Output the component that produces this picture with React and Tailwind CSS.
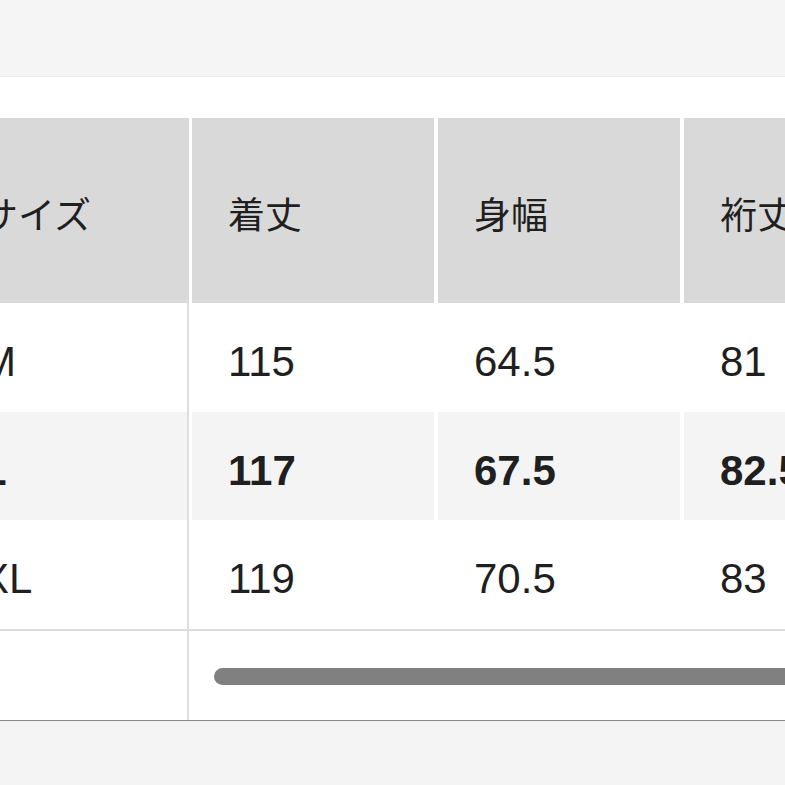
import React from 'react';

const rows = [
  { size: 'M', values: ['115', '64.5', '81'] },
  { size: 'L', values: ['117', '67.5', '82.5'], current: true },
  { size: 'XL', values: ['119', '70.5', '83'] },
];

const headers = ['着丈', '身幅', '裄丈'];

export default function App() {
  return (
    <div
      className="w-[785px] h-[785px] overflow-hidden bg-white text-[#1f1f1f]"
      style={{ fontFamily: '"Liberation Sans", "Noto Sans CJK JP", sans-serif' }}
    >
      {/* top bar */}
      <div className="h-[77px] bg-[#f5f5f5] border-b border-[#ececec]" />
      <div className="h-[41px]" />

      {/* table, scrolled a little to the right */}
      <div className="-ml-[55px] w-[1000px]">
        {/* header */}
        <div className="flex h-[185px]">
          <div className="w-[244px] bg-[#d9d9d9] flex items-center pl-9 pt-3 text-[37px]">サイズ</div>
          {headers.map((h, i) => (
            <div
              key={h}
              className={`${i === 0 ? 'ml-[3px]' : 'ml-[4px]'} w-[242px] bg-[#d9d9d9] flex items-center pl-9 pt-3 text-[37px]`}
            >
              {h}
            </div>
          ))}
        </div>

        {/* body */}
        {rows.map((r, idx) => (
          <div
            key={r.size}
            className={`flex ${idx === 1 ? 'h-[108px]' : 'h-[109px]'} ${idx === 2 ? 'border-b-2 border-[#dcdcdc] h-[111px]' : ''} text-[42px] ${r.current ? 'font-bold' : ''}`}
          >
            <div
              className={`w-[244px] border-r-2 border-[#dedede] flex items-center pl-9 pt-2 ${r.current ? 'bg-[#f4f4f4]' : ''}`}
            >
              {r.size}
            </div>
            {r.values.map((v, i) => (
              <div
                key={i}
                className={`${i === 0 ? 'ml-[3px]' : 'ml-[4px]'} w-[242px] flex items-center pl-9 pt-2 ${r.current ? 'bg-[#f4f4f4]' : ''}`}
              >
                {v}
              </div>
            ))}
          </div>
        ))}

        {/* scrollbar row */}
        <div className="flex h-[90px] border-b border-[#8a8a8a]">
          <div className="w-[244px] border-r-2 border-[#dedede]" />
          <div className="ml-[25px] mt-[37px] h-[17px] w-[700px] rounded-full bg-[#808080]" />
        </div>
      </div>

      <div className="h-[70px] bg-[#f4f4f4]" />
    </div>
  );
}
